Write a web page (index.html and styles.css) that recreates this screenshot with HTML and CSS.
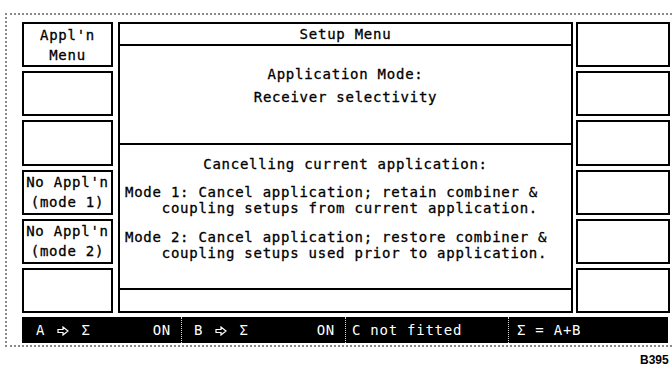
FILE: index.html
```html
<!DOCTYPE html>
<html lang="en">
<head>
  <meta charset="UTF-8">
  <title>Setup Menu</title>
  <link rel="stylesheet" href="styles.css">
</head>
<body>

<div class="frame">
  <div class="screen">
    <div class="softkeys">
      <div class="key">Appl'n<br>Menu</div>
      <div class="key"></div>
      <div class="key"></div>
      <div class="key">No Appl'n<br>(mode 1)</div>
      <div class="key">No Appl'n<br>(mode 2)</div>
      <div class="key"></div>
    </div>

    <div class="panel">
      <div class="panel-title">Setup Menu</div>
      <div class="panel-mode">
        <p>Application Mode:</p>
        <p>Receiver selectivity</p>
      </div>
      <div class="panel-cancel">
        <p class="cancel-head">Cancelling current application:</p>
        <p class="mode-text">Mode 1: Cancel application; retain combiner &amp;
    coupling setups from current application.</p>
        <p class="mode-text">Mode 2: Cancel application; restore combiner &amp;
    coupling setups used prior to application.</p>
      </div>
      <div class="panel-foot"></div>
    </div>

    <div class="softkeys">
      <div class="key"></div>
      <div class="key"></div>
      <div class="key"></div>
      <div class="key"></div>
      <div class="key"></div>
      <div class="key"></div>
    </div>
  </div>

  <div class="status">
    <div class="seg">
      <span>A <svg class="arrow" viewBox="0 0 12 10"><path d="M1 3.5h5V1l5 4-5 4V6.5H1z"/></svg> &Sigma;</span><span>ON</span>
    </div>
    <div class="seg">
      <span>B <svg class="arrow" viewBox="0 0 12 10"><path d="M1 3.5h5V1l5 4-5 4V6.5H1z"/></svg> &Sigma;</span><span>ON</span>
    </div>
    <div class="seg"><span>C not fitted</span></div>
    <div class="seg"><span>&Sigma; = A+B</span></div>
  </div>
</div>

<div class="figref">B395</div>

</body>
</html>
```

FILE: styles.css
```css
html, body {
  margin: 0;
  background: white;
  overflow: hidden;
}

body {
  width: 672px;
  height: 367px;
  font-family: 'DejaVu Sans Mono', 'Liberation Mono', monospace;
  font-size: 14px;
  letter-spacing: 0.75px;
  color: #000;
  -webkit-text-stroke: 0.3px #000;
}

.frame {
  width: 670px;
  margin: 13px 0 0 5px;
  padding: 7px 0 2px 15px;
  border: 2px dotted #8a8a8a;
  border-right: none;
}

.screen {
  display: grid;
  grid-template-columns: 91px 455px 92px;
  column-gap: 5px;
  height: 291px;
}

.screen > .softkeys:last-child {
  margin-left: -2px;
}

.softkeys {
  display: grid;
  grid-template-rows: repeat(6, 1fr);
  row-gap: 4px;
}

.key {
  border: 2px solid #000;
  display: flex;
  align-items: center;
  justify-content: center;
  text-align: center;
  line-height: 20px;
  white-space: nowrap;
}

.panel {
  border: 2px solid #000;
  display: flex;
  flex-direction: column;
}

.panel p {
  margin: 0;
}

.panel-title {
  height: 20px;
  line-height: 20px;
  text-align: center;
  border-bottom: 2px solid #000;
}

.panel-mode {
  height: 99px;
  border-bottom: 2px solid #000;
  padding-top: 17px;
  box-sizing: border-box;
  text-align: center;
  line-height: 23px;
}

.panel-cancel {
  height: 145px;
  box-sizing: border-box;
  border-bottom: 2px solid #000;
  padding: 11px 0 0 5px;
  line-height: 16px;
}

.cancel-head {
  text-align: center;
  padding-right: 5px;
  margin-bottom: 12px !important;
}

.mode-text {
  white-space: pre;
  margin-bottom: 13px !important;
}

.panel-foot {
  flex: 1;
}

.status {
  display: flex;
  margin-top: 4px;
  width: 646px;
  height: 26px;
  background: #000;
  color: #fff;
  -webkit-text-stroke: 0;
}

.seg {
  display: flex;
  align-items: center;
  justify-content: space-between;
  padding: 0 10px 0 12px;
  border-right: 1px dotted #ddd;
}

.arrow {
  width: 12px;
  height: 10px;
  margin: 0 3px;
  fill: none;
  stroke: #fff;
  stroke-width: 1.2;
  vertical-align: -1px;
}

.seg:nth-child(1) { width: 160px; padding-left: 14px; box-sizing: border-box; }
.seg:nth-child(2) { width: 164px; box-sizing: border-box; }
.seg:nth-child(3) { width: 163px; padding-left: 6px; box-sizing: border-box; }
.seg:nth-child(4) { flex: 1; border-right: none; padding-left: 8px; }

.figref {
  margin: 6px 0 0 640px;
  font-family: 'Liberation Sans', Arial, sans-serif;
  font-weight: bold;
  font-size: 12px;
  letter-spacing: 0;
  white-space: nowrap;
  -webkit-text-stroke: 0;
}
```
